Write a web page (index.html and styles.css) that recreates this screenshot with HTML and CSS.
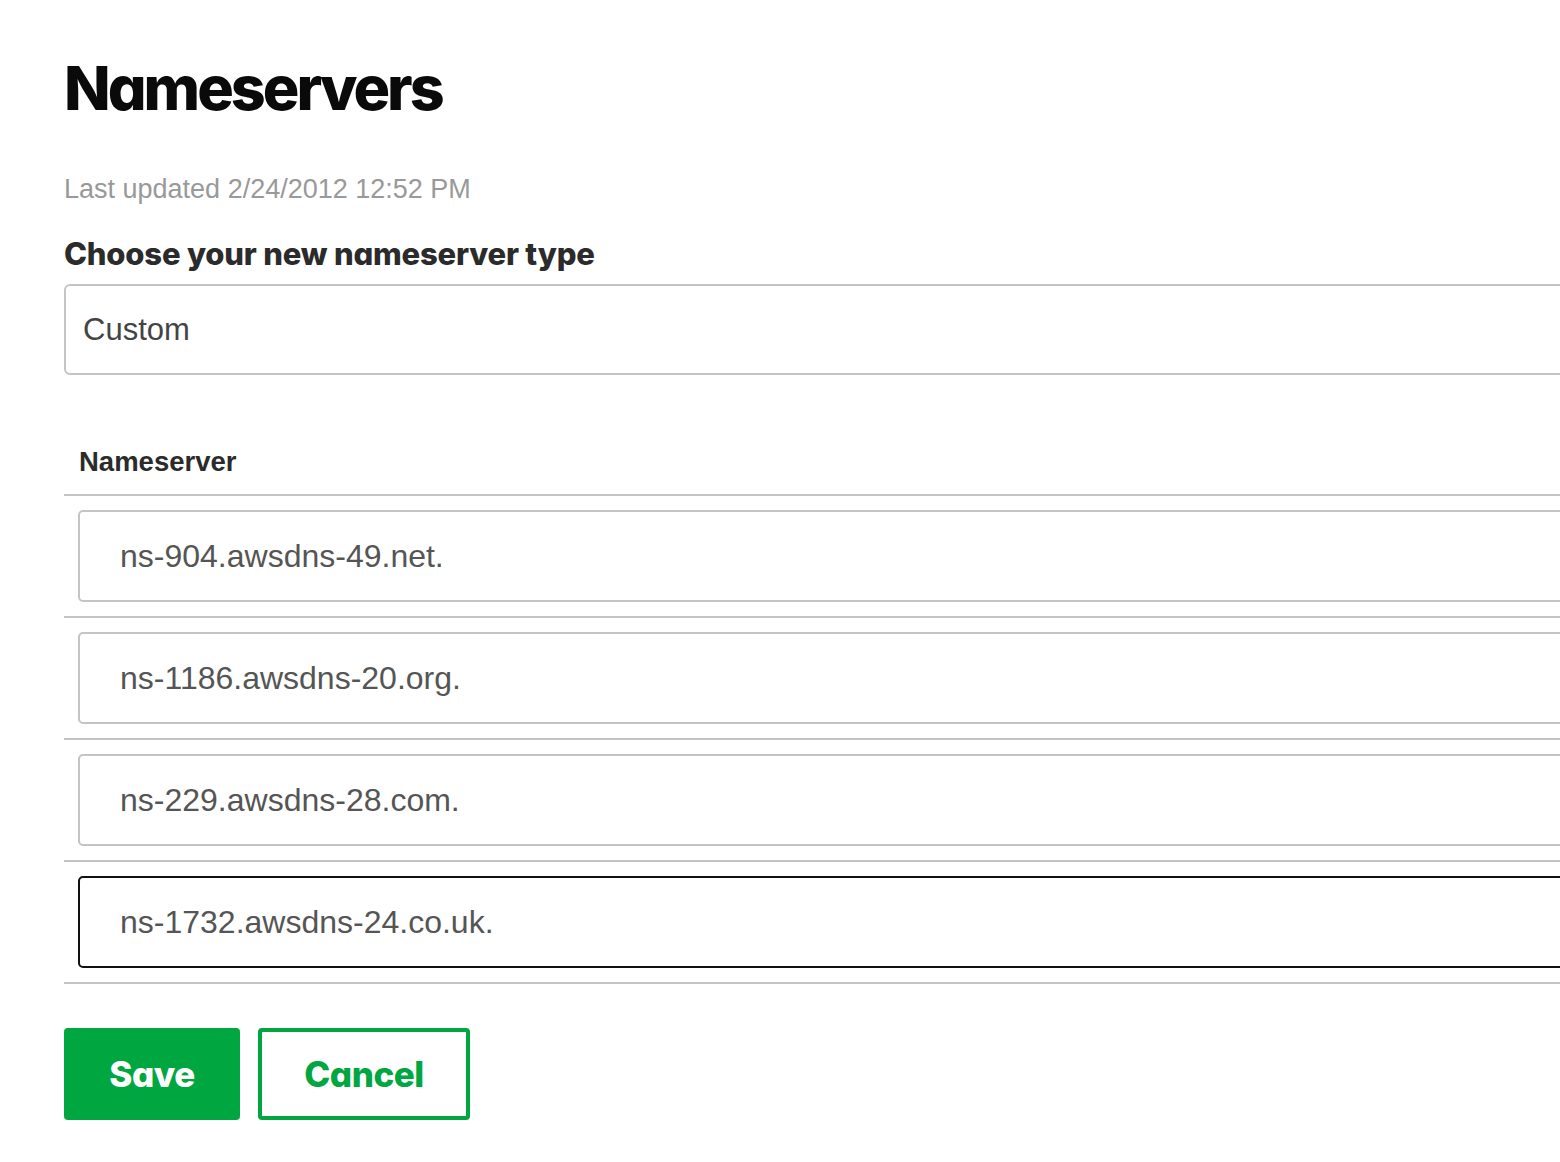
FILE: index.html
```html
<!DOCTYPE html>
<html lang="en">
<head>
<meta charset="utf-8">
<title>Nameservers</title>
<link rel="stylesheet" href="styles.css">
</head>
<body>
<main class="page">
  <h1 class="title">Nameservers</h1>
  <p class="updated">Last updated 2/24/2012 12:52 PM</p>
  <label class="type-label" for="nstype">Choose your new nameserver type</label>
  <div class="select" id="nstype">Custom</div>

  <div class="table">
    <div class="table-head">Nameserver</div>
    <div class="row"><div class="field">ns-904.awsdns-49.net.</div></div>
    <div class="row"><div class="field">ns-1186.awsdns-20.org.</div></div>
    <div class="row"><div class="field">ns-229.awsdns-28.com.</div></div>
    <div class="row"><div class="field field-focus">ns-1732.awsdns-24.co.uk.</div></div>
  </div>

  <div class="actions">
    <button class="btn btn-primary">Save</button>
    <button class="btn btn-secondary">Cancel</button>
  </div>
</main>
</body>
</html>
```
FILE: styles.css
```css
html, body {
  margin: 0;
  padding: 0;
  background: #ffffff;
  overflow: hidden;
}

.page {
  width: 1600px;
  padding: 0 0 0 64px;
  font-family: "Liberation Sans", Arial, sans-serif;
}

.title,
.type-label,
.btn {
  font-family: "Inter", "Lato", "Liberation Sans", sans-serif;
  font-feature-settings: "cv11" 1;
}

.title {
  margin: 0;
  padding-top: 50px;
  font-weight: 800;
  font-size: 61px;
  line-height: 76px;
  color: #0a0a0a;
  letter-spacing: -3px;
}

.updated {
  margin: 48px 0 0 0;
  font-size: 27px;
  line-height: 30px;
  color: #999999;
}

.type-label {
  display: block;
  margin-top: 32px;
  font-weight: 800;
  font-size: 31px;
  line-height: 36px;
  color: #2b2b2b;
  letter-spacing: -0.2px;
}

.select {
  margin-top: 12px;
  box-sizing: border-box;
  height: 91px;
  border: 2px solid #c4c4c4;
  border-radius: 6px;
  padding-left: 17px;
  display: flex;
  align-items: center;
  font-size: 31px;
  color: #444444;
}

.table {
  margin-top: 72px;
}

.table-head {
  padding: 0 0 17px 15px;
  font-size: 27.5px;
  line-height: 30px;
  font-weight: 700;
  color: #2b2b2b;
  border-bottom: 2px solid #c4c4c4;
}

.row {
  padding: 14px 0 14px 14px;
  border-bottom: 2px solid #c4c4c4;
}

.field {
  box-sizing: border-box;
  height: 92px;
  border: 2px solid #c4c4c4;
  border-radius: 5px;
  padding-left: 40px;
  display: flex;
  align-items: center;
  font-size: 32px;
  color: #555555;
}

.field-focus {
  border-color: #111111;
}

.actions {
  margin-top: 44px;
  display: flex;
  gap: 18px;
}

.btn {
  box-sizing: border-box;
  height: 92px;
  border-radius: 4px;
  font-weight: 800;
  font-size: 35px;
  letter-spacing: -0.5px;
  cursor: pointer;
}

.btn-primary {
  width: 176px;
  background: #00a63f;
  border: 0;
  color: #ffffff;
}

.btn-secondary {
  width: 212px;
  background: #ffffff;
  border: 4px solid #00a63f;
  color: #00a63f;
}
```
